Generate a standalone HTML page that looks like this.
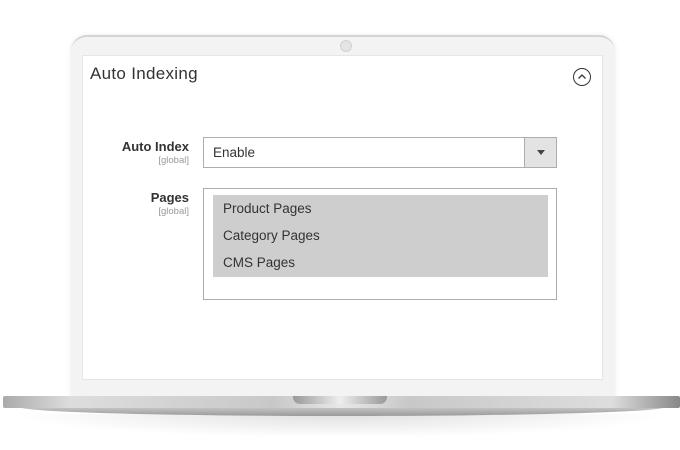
<!DOCTYPE html>
<html><head><style>
*{margin:0;padding:0;box-sizing:border-box}
body{width:680px;height:450px;background:#fff;position:relative;overflow:hidden;font-family:"Liberation Sans",sans-serif;color:#333}
.bezel{position:absolute;left:71px;top:35px;width:544px;height:365px;background:#f3f3f3;border-radius:16px 16px 0 0;border-top:2px solid #d4d4d4;box-shadow:0 0 6px rgba(0,0,0,.08)}
.cam{position:absolute;left:340px;top:40px;width:12px;height:12px;border-radius:50%;background:#e4e4e4;border:1px solid #d0d0d0}
.screen{position:absolute;left:82px;top:55px;width:521px;height:325px;background:#fff;border:1px solid #e6e6e6}
.base{position:absolute;left:3px;top:396px;width:677px;height:12px;background:linear-gradient(90deg,#aaa,#ddd 10%,#c8c8c8 40%,#e8e8e8 50%,#c8c8c8 60%,#ddd 90%,#888);border-radius:2px}
.base2{position:absolute;left:20px;top:407px;width:645px;height:9px;background:linear-gradient(#c8c8c8,#9a9a9a);border-radius:0 0 50% 50%/0 0 100% 100%}
.shadow{position:absolute;left:10px;top:414px;width:660px;height:24px;background:radial-gradient(ellipse at center top,rgba(0,0,0,.12),rgba(0,0,0,0) 70%)}
.notch{position:absolute;left:293px;top:396px;width:94px;height:8px;background:linear-gradient(90deg,#999,#eee 50%,#999);border-radius:0 0 7px 7px}
h1{position:absolute;left:90px;top:64px;font-size:17px;font-weight:normal;color:#333;letter-spacing:.3px}
.lbl{position:absolute;right:491px;text-align:right;font-size:13px;font-weight:bold;color:#333}
.lbl small{display:block;font-size:9.5px;font-weight:normal;color:#999;margin-top:1px}
.sel{position:absolute;left:203px;top:137px;width:354px;height:31px;border:1px solid #adadad;font-size:13.5px;padding:7px 9px}
.btn{position:absolute;right:0;top:0;width:32px;height:29px;background:#e3e3e3;border-left:1px solid #adadad}
.btn:after{content:"";position:absolute;left:12px;top:12px;border:4px solid transparent;border-top:5px solid #444}
.multi{position:absolute;left:203px;top:188px;width:354px;height:112px;border:1px solid #adadad}
.hl{position:absolute;left:9px;top:6px;width:335px;height:82px;background:#cecece;font-size:13.5px}
.hl div{height:27px;line-height:27px;padding-left:10px}
.tog{position:absolute;left:573px;top:68px;width:18px;height:18px;border:1.3px solid #333;border-radius:50%}
</style></head><body>
<div class="bezel"></div>
<div class="cam"></div>
<div class="screen"></div>
<div class="shadow"></div>
<div class="base2"></div>
<div class="base"></div>
<div class="notch"></div>
<h1>Auto Indexing</h1>
<div class="tog"><svg width="16" height="16" viewBox="0 0 16 16" style="position:absolute;left:0;top:0"><path d="M4.5 9.5 L8 6 L11.5 9.5" stroke="#333" stroke-width="1.3" fill="none"/></svg></div>
<div class="lbl" style="top:139px">Auto Index<small>[global]</small></div>
<div class="sel">Enable<div class="btn"></div></div>
<div class="lbl" style="top:190px">Pages<small>[global]</small></div>
<div class="multi"><div class="hl"><div>Product Pages</div><div>Category Pages</div><div>CMS Pages</div></div></div>
</body></html>
